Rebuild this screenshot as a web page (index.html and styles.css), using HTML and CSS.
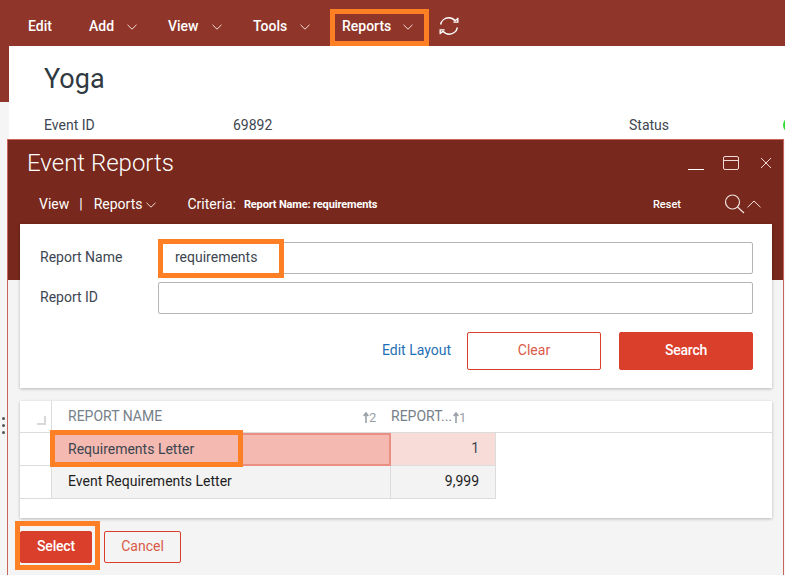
FILE: index.html
```html
<!DOCTYPE html>
<html lang="en">
<head>
    <meta charset="UTF-8">
    <title>Event Reports</title>
    <link rel="stylesheet" href="styles.css">
</head>
<body>
    <header class="topbar">
        <a class="menu-item menu-edit">Edit</a>
        <a class="menu-item menu-add">Add <svg class="chev" viewBox="0 0 10 6"><path d="M.5.8 5 5.2 9.500.8"/></svg></a>
        <a class="menu-item menu-view">View <svg class="chev" viewBox="0 0 10 6"><path d="M.5.8 5 5.2 9.500.8"/></svg></a>
        <a class="menu-item menu-tools">Tools <svg class="chev" viewBox="0 0 10 6"><path d="M.5.8 5 5.2 9.500.8"/></svg></a>
        <a class="menu-item menu-reports">Reports <svg class="chev" viewBox="0 0 10 6"><path d="M.5.8 5 5.2 9.500.8"/></svg></a>
        <svg class="refresh" viewBox="0 0 20 20">
            <path d="M1.600 8.500C2.400 4.600 5.800 1.800 9.800 1.800c2.500 0 4.700 1.100 6.300 2.900l2-1.700"/>
            <path d="M18.800 1.700v4.400h-4.400"/>
            <path d="M18.400 11.500c-.8 3.900-4.200 6.700-8.200 6.700-2.500 0-4.700-1.100-6.300-2.900l-2 1.700"/>
            <path d="M1.200 18.300v-4.400h4.400"/>
        </svg>
    </header>

    <section class="record-band">
        <div class="record">
            <h1>Yoga</h1>
            <div class="record-row">
                <span class="record-label">Event ID</span>
                <span class="record-value">69892</span>
                <span class="record-status">Status</span>
            </div>
            <span class="status-dot"></span>
        </div>
    </section>

    <section class="modal">
        <div class="modal-title">
            <h2>Event Reports</h2>
            <div class="window-tools">
                <span class="win-min"></span>
                <svg class="win-max" viewBox="0 0 16 14"><rect x=".5" y=".5" width="15" height="13" rx="1.500"/><path d="M.5 4.500h15"/></svg>
                <svg class="win-close" viewBox="0 0 12 12"><path d="M1 1l10 10M11 1 1 11"/></svg>
            </div>
        </div>
        <div class="modal-toolbar">
            <span class="tb-link">View</span>
            <span class="tb-sep">|</span>
            <span class="tb-link">Reports</span>
            <svg class="chev tb-chev" viewBox="0 0 10 6"><path d="M.5.8 5 5.2 9.500.8"/></svg>
            <span class="tb-criteria">Criteria:</span>
            <span class="tb-criteria-value">Report Name: requirements</span>
            <span class="tb-reset">Reset</span>
            <svg class="tb-search" viewBox="0 0 22 20"><circle cx="8.500" cy="8" r="7"/><path d="M13.500 13 20 19"/></svg>
            <svg class="tb-up" viewBox="0 0 14 8"><path d="M.5 7.300 7 1l6.500 6.300"/></svg>
        </div>

        <form class="search-card">
            <div class="field">
                <label>Report Name</label>
                <div class="input-box">requirements</div>
            </div>
            <div class="field">
                <label>Report ID</label>
                <div class="input-box"></div>
            </div>
            <div class="search-actions">
                <a class="edit-layout">Edit Layout</a>
                <button type="button" class="btn btn-clear">Clear</button>
                <button type="button" class="btn btn-search">Search</button>
            </div>
        </form>

        <div class="grid-card">
            <div class="grid-row grid-head">
                <div class="cell cell-check"><span class="corner"></span></div>
                <div class="cell cell-name">
                    REPORT NAME
                    <span class="sort"><svg class="sort-arrow" viewBox="0 0 6 11"><path d="M3 11V1.500M.7 4 3 1l2.300 3"/></svg>2</span>
                </div>
                <div class="cell cell-id">
                    REPORT...
                    <span class="sort"><svg class="sort-arrow" viewBox="0 0 6 11"><path d="M3 11V1.500M.7 4 3 1l2.300 3"/></svg>1</span>
                </div>
            </div>
            <div class="grid-row row-selected">
                <div class="cell cell-check"></div>
                <div class="cell cell-name">Requirements Letter</div>
                <div class="cell cell-id">1</div>
            </div>
            <div class="grid-row row-plain">
                <div class="cell cell-check"></div>
                <div class="cell cell-name">Event Requirements Letter</div>
                <div class="cell cell-id">9,999</div>
            </div>
        </div>

        <div class="modal-actions">
            <button type="button" class="btn btn-select">Select</button>
            <button type="button" class="btn btn-cancel">Cancel</button>
        </div>
    </section>

    <div class="drag-dots"><i></i><i></i><i></i></div>

    <!-- orange callouts -->
    <div class="callout callout-reports"></div>
    <div class="callout callout-input"></div>
    <div class="callout callout-row"></div>
    <div class="callout callout-select"></div>
</body>
</html>
```

FILE: styles.css
```css
* {
    margin: 0;
    padding: 0;
    box-sizing: border-box;
    font-family: Roboto, "Liberation Sans", sans-serif;
}

html, body {
    width: 785px;
    height: 575px;
    overflow: hidden;
}

body {
    position: relative;
    background-color: #f5f5f5;
    color: #3d4650;
    font-size: 14px;
}

svg {
    display: block;
    fill: none;
}

.topbar {
    display: flex;
    align-items: center;
    height: 46px;
    padding-top: 6px;
    background-color: #8f3529;
}

.menu-item {
    display: flex;
    align-items: center;
    color: #fff;
    font-size: 14px;
    font-weight: 500;
    white-space: nowrap;
}

.menu-edit { margin-left: 28px; width: 61px; }
.menu-add { width: 79px; }
.menu-view { width: 85px; }
.menu-tools { width: 89px; }
.menu-reports { width: 92px; }

.chev {
    width: 10px;
    height: 6px;
    margin-left: 13px;
    margin-top: 2px;
    stroke: #f3dcd8;
    stroke-width: 1;
}

.menu-reports .chev {
    margin-left: 12px;
}

.refresh {
    width: 20px;
    height: 20px;
    margin-left: 5px;
    stroke: #fff;
    stroke-width: 1.400;
}

.record-band {
    height: 93px;
    padding-left: 9px;
    background: linear-gradient(#8f3529 56px, #f5f5f5 56px);
}

.record {
    position: relative;
    height: 93px;
    padding: 16px 0 0 35px;
    background-color: #fff;
    overflow: hidden;
}

.record h1 {
    font-size: 27px;
    font-weight: 400;
    line-height: 34px;
    color: #2f3942;
}

.record-row {
    display: flex;
    margin-top: 20px;
    line-height: 18px;
}

.record-label { width: 189px; }
.record-value { width: 396px; }

.status-dot {
    position: absolute;
    left: 774px;
    top: 71px;
    width: 16px;
    height: 16px;
    border-radius: 50%;
    background-color: #2ee02e;
}

.modal {
    width: 777px;
    height: 436px;
    margin-left: 7px;
    border: 1px solid #c9645a;
    border-bottom: none;
    background: linear-gradient(#78281c 140px, #f4f4f4 140px);
}

.modal-title {
    display: flex;
    justify-content: space-between;
    height: 44px;
    padding: 8px 11px 0 19px;
}

.modal-title h2 {
    font-size: 24px;
    font-weight: 300;
    line-height: 30px;
    color: #fff;
}

.window-tools {
    display: flex;
    align-items: center;
    height: 30px;
}

.win-min {
    width: 16px;
    height: 1px;
    margin-top: 13px;
    background-color: #fff;
}

.win-max {
    width: 16px;
    height: 14px;
    margin-left: 19px;
    stroke: #f3dcd8;
}

.win-close {
    width: 12px;
    height: 12px;
    margin-left: 21px;
    stroke: #f3dcd8;
}

.modal-toolbar {
    display: flex;
    align-items: center;
    height: 40px;
    padding: 0 0 0 31px;
    color: #fff;
}

.tb-link {
    font-size: 14px;
}

.tb-sep {
    margin: 0 11px 0 10px;
    font-size: 14px;
}

.modal-toolbar .tb-chev {
    margin-left: 4px;
}

.tb-criteria {
    margin-left: 31px;
    font-size: 14px;
}

.tb-criteria-value {
    margin-left: 8px;
    width: 409px;
    color: #fff;
    font-size: 11px;
    font-weight: 700;
    letter-spacing: -0.15px;
    white-space: nowrap;
}

.tb-reset {
    color: #fff;
    font-size: 11px;
    font-weight: 500;
}

.tb-search {
    width: 22px;
    height: 20px;
    margin-left: 43px;
    stroke: #efe3e0;
    stroke-width: 1.200;
}

.tb-up {
    width: 14px;
    height: 8px;
    margin-left: 1px;
    stroke: #efe3e0;
    stroke-width: 1;
}

.search-card {
    width: 752px;
    height: 164px;
    margin-left: 12px;
    padding: 18px 19px 0 20px;
    background-color: #fff;
    box-shadow: 0 1px 3px rgba(0,0,0,0.25);
}

.field {
    display: flex;
    align-items: center;
    margin-bottom: 8px;
}

.field label {
    width: 118px;
    padding-bottom: 2px;
    font-size: 14px;
}

.input-box {
    width: 595px;
    height: 32px;
    padding-left: 16px;
    border: 1px solid #b5b5b5;
    border-radius: 2px;
    font-size: 14px;
    line-height: 28px;
}

.search-actions {
    display: flex;
    align-items: center;
    justify-content: flex-end;
    margin-top: 18px;
}

.edit-layout {
    margin-right: 16px;
    padding-bottom: 2px;
    color: #1f70b5;
    font-size: 14px;
}

.btn {
    height: 38px;
    padding-bottom: 2px;
    border-radius: 2px;
    border: 1px solid #da3f2c;
    font-size: 14px;
    cursor: pointer;
}

.btn-clear {
    width: 134px;
    margin-right: 18px;
    background-color: #fff;
    color: #da5a48;
}

.btn-search {
    width: 134px;
    background-color: #da3f2c;
    color: #fff;
    font-weight: 500;
    letter-spacing: -0.2px;
}

.grid-card {
    width: 752px;
    height: 117px;
    margin-top: 13px;
    margin-left: 12px;
    background-color: #fff;
    box-shadow: 0 1px 3px rgba(0,0,0,0.25);
}

.grid-row {
    display: grid;
    grid-template-columns: 32px 339px 105px;
    font-size: 14px;
}

.cell {
    height: 33px;
    line-height: 31px;
    border-bottom: 1px solid #dcdcdc;
    border-right: 1px solid #dcdcdc;
}

.grid-head {
    grid-template-columns: 32px 339px 1fr;
    color: #77808a;
}

.grid-head .cell {
    height: 32px;
    border-right: none;
}

.grid-head .cell-check {
    border-right: 1px solid #dcdcdc;
}

.grid-head .cell-name {
    position: relative;
}

.grid-head .cell-id {
    display: flex;
    padding-left: 0;
    text-align: left;
}

.cell-check {
    position: relative;
}

.cell-name {
    padding-left: 16px;
}

.cell-id {
    padding-right: 16px;
    text-align: right;
}

.corner {
    position: absolute;
    left: 17px;
    top: 15px;
    width: 9px;
    height: 9px;
    border-right: 2px solid #d8d8d8;
    border-bottom: 2px solid #d8d8d8;
}

.sort {
    display: flex;
    align-items: center;
    height: 31px;
    padding-top: 2px;
    color: #9aa0a6;
    font-size: 13px;
}

.sort-arrow {
    width: 6px;
    height: 11px;
    stroke: #9aa0a6;
    stroke-width: 1.600;
}

.cell-name .sort {
    position: absolute;
    left: 311px;
    top: 0;
}

.cell-id .sort {
    margin-left: 1px;
}

.row-selected .cell-name {
    background-color: #f4b9b1;
    border: 2px solid #ea8f83;
    border-left-width: 0;
    line-height: 29px;
}

.row-selected .cell-id {
    background-color: #f7dcd8;
}

.row-plain {
    color: #1e1e1e;
}

.row-plain .cell-name,
.row-plain .cell-id {
    background-color: #f3f3f3;
}

.modal-actions {
    display: flex;
    margin: 13px 0 0 12px;
}

.modal-actions .btn {
    height: 32px;
}

.btn-select {
    width: 72px;
    background-color: #da3f2c;
    color: #fff;
    font-weight: 500;
    letter-spacing: -0.2px;
}

.btn-cancel {
    width: 77px;
    margin-left: 12px;
    background-color: transparent;
    color: #da5a48;
}

.drag-dots {
    position: absolute;
    left: 2px;
    top: 417px;
}

.drag-dots i {
    display: block;
    width: 3px;
    height: 3px;
    margin-bottom: 4px;
    border-radius: 50%;
    background-color: #555;
}

.callout {
    position: absolute;
    border: 5px solid #ff8024;
}

.callout-reports { left: 330px; top: 9px; width: 99px; height: 37px; }
.callout-input { left: 158px; top: 239px; width: 126px; height: 39px; }
.callout-row { left: 50px; top: 430px; width: 193px; height: 37px; }
.callout-select { left: 15px; top: 521px; width: 85px; height: 49px; }
```
